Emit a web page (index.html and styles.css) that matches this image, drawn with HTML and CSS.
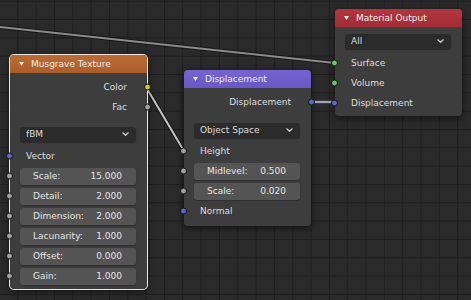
FILE: index.html
```html
<!DOCTYPE html>
<html>
<head>
<meta charset="utf-8">
<link rel="stylesheet" href="styles.css">
</head>
<body>
<div class="canvas">
  <svg class="links" width="471" height="300" viewBox="0 0 471 300">
    <g class="shadow">
      <line x1="-5" y1="26.5" x2="335" y2="63"/>
      <line x1="146" y1="87" x2="184" y2="151"/>
      <line x1="311" y1="102" x2="335" y2="102"/>
    </g>
    <line class="l-grey" x1="-5" y1="26.5" x2="335" y2="63"/>
    <line class="l-light" x1="146" y1="87" x2="184" y2="151"/>
    <line class="l-purple" x1="311" y1="102" x2="335" y2="102"/>
  </svg>

  <div class="node musgrave selected">
    <div class="header hd-orange">
      <svg class="tri" width="5" height="4" viewBox="0 0 5 4"><polygon points="0,0 5,0 2.5,4"/></svg>
      <span>Musgrave Texture</span>
    </div>
    <div class="body">
      <div class="row out">Color<span class="sock s-yellow"></span></div>
      <div class="row out">Fac<span class="sock s-grey"></span></div>
      <div class="row sel-row gap7">
        <div class="select"><span>fBM</span>
          <svg class="chev" width="7" height="4" viewBox="0 0 7 4"><polyline points="0.5,0.5 3.5,3.3 6.5,0.5"/></svg>
        </div>
      </div>
      <div class="row in gap2"><span class="sock s-purple"></span>Vector</div>
      <div class="row"><span class="sock s-grey"></span><div class="field"><span>Scale:</span><span>15.000</span></div></div>
      <div class="row"><span class="sock s-grey"></span><div class="field"><span>Detail:</span><span>2.000</span></div></div>
      <div class="row"><span class="sock s-grey"></span><div class="field"><span>Dimension:</span><span>2.000</span></div></div>
      <div class="row"><span class="sock s-grey"></span><div class="field"><span>Lacunarity:</span><span>1.000</span></div></div>
      <div class="row"><span class="sock s-grey"></span><div class="field"><span>Offset:</span><span>0.000</span></div></div>
      <div class="row"><span class="sock s-grey"></span><div class="field"><span>Gain:</span><span>1.000</span></div></div>
    </div>
  </div>

  <div class="node displacement">
    <div class="header hd-purple">
      <svg class="tri" width="5" height="4" viewBox="0 0 5 4"><polygon points="0,0 5,0 2.5,4"/></svg>
      <span>Displacement</span>
    </div>
    <div class="body">
      <div class="row out">Displacement<span class="sock s-purple"></span></div>
      <div class="row sel-row gap8">
        <div class="select"><span>Object Space</span>
          <svg class="chev" width="7" height="4" viewBox="0 0 7 4"><polyline points="0.5,0.5 3.5,3.3 6.5,0.5"/></svg>
        </div>
      </div>
      <div class="row in gap1"><span class="sock s-grey"></span>Height</div>
      <div class="row"><span class="sock s-grey"></span><div class="field"><span>Midlevel:</span><span>0.500</span></div></div>
      <div class="row"><span class="sock s-grey"></span><div class="field"><span>Scale:</span><span>0.020</span></div></div>
      <div class="row in"><span class="sock s-purple"></span>Normal</div>
    </div>
  </div>

  <div class="node output">
    <div class="header hd-red">
      <svg class="tri" width="5" height="4" viewBox="0 0 5 4"><polygon points="0,0 5,0 2.5,4"/></svg>
      <span>Material Output</span>
    </div>
    <div class="body">
      <div class="row sel-row">
        <div class="select"><span>All</span>
          <svg class="chev" width="7" height="4" viewBox="0 0 7 4"><polyline points="0.5,0.5 3.5,3.3 6.5,0.5"/></svg>
        </div>
      </div>
      <div class="row in gap2"><span class="sock s-green"></span>Surface</div>
      <div class="row in"><span class="sock s-green"></span>Volume</div>
      <div class="row in"><span class="sock s-purple"></span>Displacement</div>
    </div>
  </div>
</div>
</body>
</html>
```

FILE: styles.css
```css
html, body {
  margin: 0;
  padding: 0;
  background: #292929;
}

.canvas {
  position: relative;
  width: 471px;
  height: 300px;
  overflow: hidden;
  background-color: #2a2a2a;
  background-image:
    linear-gradient(to right, #1e1e1e 1px, transparent 1px),
    linear-gradient(to bottom, #1e1e1e 1px, transparent 1px);
  background-size: 18.33px 18.33px;
  background-position: -1px 0.7px;
  font-family: "DejaVu Sans", "Liberation Sans", sans-serif;
  font-size: 9px;
  color: #dedede;
}

.links {
  position: absolute;
  left: 0;
  top: 0;
}

.links .shadow line {
  stroke: rgba(10, 10, 10, 0.55);
  stroke-width: 4;
}

.l-grey { stroke: #8c8c8c; stroke-width: 2; }
.l-light { stroke: #c4c4c4; stroke-width: 2; }
.l-purple { stroke: #a4a2b8; stroke-width: 2.5; }

.node {
  position: absolute;
  background: #3d3d3d;
  border-radius: 4px;
  box-shadow: 0 2px 7px rgba(0, 0, 0, 0.6);
  display: flex;
  flex-direction: column;
}

.node.selected {
  box-shadow: 0 0 0 1px #ede6df, 0 2px 7px rgba(0, 0, 0, 0.6);
}

.musgrave { left: 10px; top: 55px; width: 137px; height: 234px; }
.displacement { left: 184px; top: 70px; width: 127px; height: 156px; }
.output { left: 335px; top: 9px; width: 127px; height: 107px; }

.header {
  height: 18px;
  flex: none;
  display: flex;
  align-items: center;
  gap: 7px;
  padding-left: 9px;
  border-radius: 4px 4px 0 0;
  color: #f0ebe6;
}

.hd-orange { background: linear-gradient(#bb6c36, #ab5d2b); }
.hd-purple { background: linear-gradient(#7564cf, #6a59c4); }
.hd-red { background: linear-gradient(#b2363f, #a22c36); }

.tri polygon { fill: #ece4de; }

.body {
  display: flex;
  flex-direction: column;
  padding-top: 4px;
}

.row {
  position: relative;
  height: 20px;
  flex: none;
  display: flex;
  align-items: center;
}

.row.out {
  justify-content: flex-end;
  padding-right: 20px;
}

.row.in {
  padding-left: 16px;
}

.gap1 { margin-top: 1px; }
.gap2 { margin-top: 2px; }
.gap7 { margin-top: 7px; }
.gap8 { margin-top: 8px; }

.sock {
  position: absolute;
  top: 50%;
  width: 5px;
  height: 5px;
  border: 1px solid #151515;
  border-radius: 50%;
  transform: translateY(-50%);
}

.row.out .sock { right: -4px; }
.row .sock { left: -4px; }
.row.out .sock { left: auto; }

.s-yellow { background: #c7c729; }
.s-grey { background: #a1a1a1; }
.s-purple { background: #6363c7; }
.s-green { background: #63c763; }

.select {
  flex: 1;
  height: 15px;
  margin: 0 11px 0 10px;
  padding: 0 7px 0 6px;
  background: #2b2b2b;
  border-radius: 3px;
  box-shadow: 0 1px 1px rgba(0, 0, 0, 0.3);
  display: flex;
  align-items: center;
  justify-content: space-between;
  color: #dcdcdc;
}

.chev polyline {
  fill: none;
  stroke: #cfcfcf;
  stroke-width: 1.2;
}

.field {
  flex: 1;
  height: 17px;
  margin: 0 11px 0 10px;
  padding: 0 14px 0 13px;
  background: #545454;
  border-radius: 3px;
  box-shadow: 0 1px 1px rgba(0, 0, 0, 0.25);
  display: flex;
  align-items: center;
  justify-content: space-between;
  color: #e4e4e4;
}
```
